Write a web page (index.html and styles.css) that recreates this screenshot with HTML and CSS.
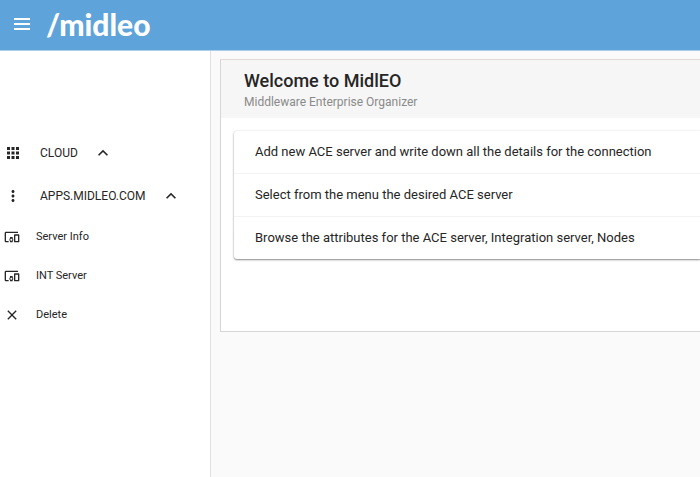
FILE: index.html
```html
<!DOCTYPE html>
<html lang="en">
<head>
<meta charset="utf-8">
<meta name="viewport" content="width=device-width, initial-scale=1">
<title>Midleo</title>
<link rel="stylesheet" href="styles.css">
</head>
<body>
<header class="topbar">
  <button class="menu-button" type="button" aria-label="Menu">
    <svg width="16" height="12" viewBox="0 0 16 12"><path d="M0 1h16M0 6h16M0 11h16"/></svg>
  </button>
  <a class="logo" href="#">/midleo</a>
</header>
<div class="layout">
  <nav class="sidebar">
    <button class="group" type="button">
      <svg class="icon" viewBox="0 0 24 24"><path d="M4 8h4V4H4v4zm6 12h4v-4h-4v4zm-6 0h4v-4H4v4zm0-6h4v-4H4v4zm6 0h4v-4h-4v4zm6-10v4h4V4h-4zm-6 4h4V4h-4v4zm6 6h4v-4h-4v4zm0 6h4v-4h-4v4z"/></svg>
      <span>CLOUD</span>
      <svg class="chevron" viewBox="0 0 24 24"><path d="M12 8l-6 6 1.410 1.410L12 10.830l4.590 4.580L18 14z"/></svg>
    </button>
    <button class="group" type="button">
      <svg class="icon" viewBox="0 0 24 24"><path d="M12 8c1.100 0 2-.9 2-2s-.9-2-2-2-2 .9-2 2 .9 2 2 2zm0 2c-1.100 0-2 .9-2 2s.9 2 2 2 2-.9 2-2-.9-2-2-2zm0 6c-1.100 0-2 .9-2 2s.9 2 2 2 2-.9 2-2-.9-2-2-2z"/></svg>
      <span>APPS.MIDLEO.COM</span>
      <svg class="chevron" viewBox="0 0 24 24"><path d="M12 8l-6 6 1.410 1.410L12 10.830l4.590 4.580L18 14z"/></svg>
    </button>
    <a class="item" href="#">
      <svg class="item-icon" viewBox="0 0 24 24"><path d="M3 6h18V4H3c-1.100 0-2 .9-2 2v12c0 1.100.9 2 2 2h4v-2H3V6zm10 6H9v1.780c-.61.550-1 1.330-1 2.220s.390 1.670 1 2.220V20h4v-1.780c.61-.550 1-1.340 1-2.220s-.390-1.670-1-2.220V12zm-2 5.500c-.830 0-1.500-.670-1.500-1.500s.670-1.500 1.500-1.500 1.500.67 1.500 1.500-.67 1.500-1.500 1.500zM22 8h-6c-.5 0-1 .5-1 1v10c0 .5.5 1 1 1h6c.5 0 1-.5 1-1V9c0-.5-.5-1-1-1zm-1 10h-4v-8h4v8z"/></svg>
      <span>Server Info</span>
    </a>
    <a class="item" href="#">
      <svg class="item-icon" viewBox="0 0 24 24"><path d="M3 6h18V4H3c-1.100 0-2 .9-2 2v12c0 1.100.9 2 2 2h4v-2H3V6zm10 6H9v1.780c-.61.550-1 1.330-1 2.220s.390 1.670 1 2.220V20h4v-1.780c.61-.550 1-1.340 1-2.220s-.390-1.670-1-2.220V12zm-2 5.500c-.830 0-1.500-.670-1.500-1.500s.670-1.500 1.500-1.500 1.500.67 1.500 1.500-.67 1.500-1.500 1.500zM22 8h-6c-.5 0-1 .5-1 1v10c0 .5.5 1 1 1h6c.5 0 1-.5 1-1V9c0-.5-.5-1-1-1zm-1 10h-4v-8h4v8z"/></svg>
      <span>INT Server</span>
    </a>
    <a class="item" href="#">
      <svg class="item-icon" viewBox="0 0 24 24"><path d="M19 6.410L17.590 5 12 10.590 6.410 5 5 6.410 10.590 12 5 17.590 6.410 19 12 13.410 17.590 19 19 17.590 13.410 12z"/></svg>
      <span>Delete</span>
    </a>
  </nav>
  <main class="content">
    <section class="card">
      <div class="card-header">
        <h1>Welcome to MidlEO</h1>
        <p>Middleware Enterprise Organizer</p>
      </div>
      <ul class="steps">
        <li>Add new ACE server and write down all the details for the connection</li>
        <li>Select from the menu the desired ACE server</li>
        <li>Browse the attributes for the ACE server, Integration server, Nodes</li>
      </ul>
    </section>
  </main>
</div>
</body>
</html>
```
FILE: styles.css
```css
* { box-sizing: border-box; }
body {
  margin: 0;
  min-height: 100vh;
  display: flex;
  flex-direction: column;
  font-family: Roboto, sans-serif;
  color: #262626;
  background: #fafafa;
}
button { border: 0; background: none; font: inherit; color: inherit; padding: 0; }
a { color: inherit; text-decoration: none; }
svg { display: block; flex: none; fill: currentColor; }
.topbar {
  display: flex;
  align-items: center;
  gap: 16px;
  height: 51px;
  padding: 0 14px 3px;
  background: #5ea3da;
  border-bottom: 1px solid #a9cdea;
  color: #fff;
}
.menu-button svg { stroke: #fff; stroke-width: 2; }
.logo { font: 900 30px/40px Lato, sans-serif; }
.layout { flex: 1; display: flex; }
.sidebar {
  flex: 0 0 211px;
  padding-top: 80px;
  background: #fff;
  border-right: 1px solid #e0e0e0;
}
.group {
  display: flex;
  align-items: center;
  width: 100%;
  height: 43px;
  padding-left: 4px;
  font-size: 12px;
}
.icon { width: 18px; height: 18px; margin-right: 18px; }
.chevron { width: 20px; height: 20px; margin-left: 15px; }
.item {
  display: flex;
  align-items: center;
  gap: 16px;
  height: 39px;
  padding-left: 4px;
  font-size: 11px;
}
.item-icon { width: 16px; height: 16px; }
.content { flex: 1; min-width: 0; padding: 8px 0 0 9px; }
.card {
  padding-bottom: 72px;
  background: #fff;
  border: 1px solid #d6d6d6;
  border-top-color: #e3d9d6;
  border-right: 0;
}
.card-header { padding: 9px 23px 7px; background: #f6f6f6; }
h1 { margin: 0; font-size: 18px; line-height: 24px; font-weight: 500; }
p { margin: 0; font-size: 12px; line-height: 18px; color: #8a8a8a; }
.steps {
  margin: 13px 0 0 13px;
  padding: 0;
  list-style: none;
  border-radius: 3px 0 0 3px;
  box-shadow: 0 1px 2px rgba(0, 0, 0, .45), 0 0 2px rgba(0, 0, 0, .1);
}
.steps li { padding: 11px 21px; font-size: 13px; line-height: 20px; }
.steps li + li { border-top: 1px solid #f3f3f3; }
```
